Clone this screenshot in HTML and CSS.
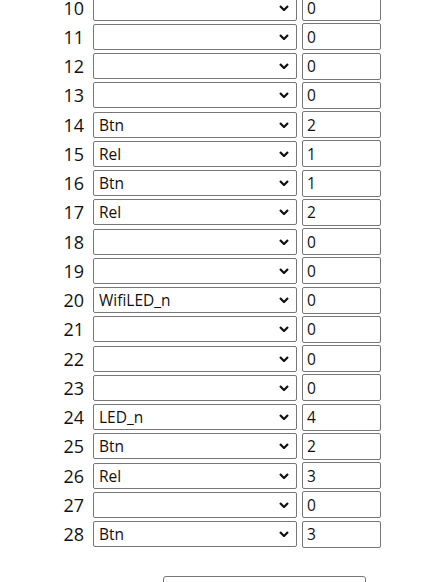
FILE: index.html
```html
<!DOCTYPE html>
<html lang="en">
<head>
    <meta charset="UTF-8">
    <meta name="viewport" content="width=device-width, initial-scale=1.0">
    <title>GPIO Config</title>
    <link rel="stylesheet" href="styles.css">
</head>
<body>
    <form class="gpio-form">
        <div class="gpio-list">
            <div class="gpio-row"><label class="pin">10</label><select class="role"><option></option></select><input class="channel" type="text" value="0"></div>
            <div class="gpio-row"><label class="pin">11</label><select class="role"><option></option></select><input class="channel" type="text" value="0"></div>
            <div class="gpio-row"><label class="pin">12</label><select class="role"><option></option></select><input class="channel" type="text" value="0"></div>
            <div class="gpio-row"><label class="pin">13</label><select class="role"><option></option></select><input class="channel" type="text" value="0"></div>
            <div class="gpio-row"><label class="pin">14</label><select class="role"><option>Btn</option></select><input class="channel" type="text" value="2"></div>
            <div class="gpio-row"><label class="pin">15</label><select class="role"><option>Rel</option></select><input class="channel" type="text" value="1"></div>
            <div class="gpio-row"><label class="pin">16</label><select class="role"><option>Btn</option></select><input class="channel" type="text" value="1"></div>
            <div class="gpio-row"><label class="pin">17</label><select class="role"><option>Rel</option></select><input class="channel" type="text" value="2"></div>
            <div class="gpio-row"><label class="pin">18</label><select class="role"><option></option></select><input class="channel" type="text" value="0"></div>
            <div class="gpio-row"><label class="pin">19</label><select class="role"><option></option></select><input class="channel" type="text" value="0"></div>
            <div class="gpio-row"><label class="pin">20</label><select class="role"><option>WifiLED_n</option></select><input class="channel" type="text" value="0"></div>
            <div class="gpio-row"><label class="pin">21</label><select class="role"><option></option></select><input class="channel" type="text" value="0"></div>
            <div class="gpio-row"><label class="pin">22</label><select class="role"><option></option></select><input class="channel" type="text" value="0"></div>
            <div class="gpio-row"><label class="pin">23</label><select class="role"><option></option></select><input class="channel" type="text" value="0"></div>
            <div class="gpio-row"><label class="pin">24</label><select class="role"><option>LED_n</option></select><input class="channel" type="text" value="4"></div>
            <div class="gpio-row"><label class="pin">25</label><select class="role"><option>Btn</option></select><input class="channel" type="text" value="2"></div>
            <div class="gpio-row"><label class="pin">26</label><select class="role"><option>Rel</option></select><input class="channel" type="text" value="3"></div>
            <div class="gpio-row"><label class="pin">27</label><select class="role"><option></option></select><input class="channel" type="text" value="0"></div>
            <div class="gpio-row"><label class="pin">28</label><select class="role"><option>Btn</option></select><input class="channel" type="text" value="3"></div>
        </div>
        <div class="actions">
            <button type="submit" class="save">Save pins</button>
        </div>
    </form>
</body>
</html>
```

FILE: styles.css
```css
body {
    margin: 0;
    font-family: 'Open Sans', 'Noto Sans', sans-serif;
    color: #111;
    background: #fff;
}

/* page is shown scrolled down a bit, so the first row is cut */
.gpio-list {
    margin-top: -7px;
}

.gpio-row {
    display: flex;
    align-items: center;
    height: 29.25px;
}

.pin {
    width: 84px;
    text-align: right;
    font-size: 18px;
    line-height: 1;
    margin-right: 9px;
}

.role,
.channel {
    box-sizing: border-box;
    border: 1px solid #767676;
    border-radius: 2px;
    background-color: #fff;
    font-family: 'Open Sans', 'Noto Sans', sans-serif;
    font-size: 15.5px;
    color: #111;
    margin: 0;
}

.role {
    appearance: none;
    -webkit-appearance: none;
    width: 204px;
    height: 26px;
    padding: 0 24px 0 5px;
    background-image: url("data:image/svg+xml,%3Csvg xmlns='http://www.w3.org/2000/svg' width='10' height='6' viewBox='0 0 10 6'%3E%3Cpath d='M1 1l4 4 4-4' fill='none' stroke='%23111' stroke-width='2.2'/%3E%3C/svg%3E");
    background-repeat: no-repeat;
    background-position: right 7px center;
}

.channel {
    width: 79px;
    height: 27px;
    margin-left: 5px;
    padding: 0 4px;
}

.actions {
    margin-top: 27px;
    padding-left: 163px;
}

.save {
    width: 203px;
    height: 40px;
    border: 1px solid #767676;
    border-radius: 3px;
    background: #fff;
    font-family: 'Open Sans', 'Noto Sans', sans-serif;
    font-size: 15px;
}
```
